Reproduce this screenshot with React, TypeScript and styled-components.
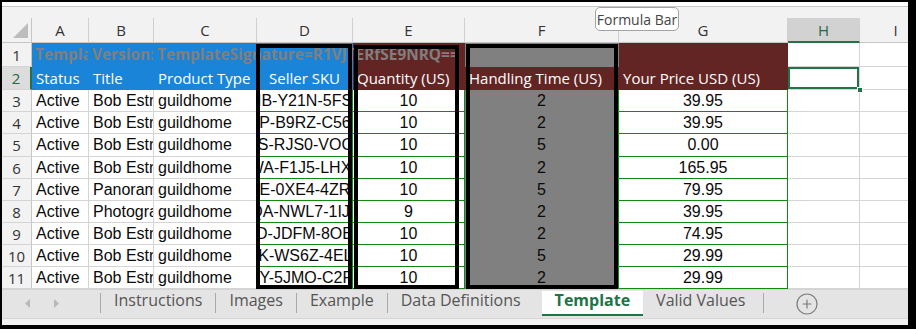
import React from 'react';
import styled, { createGlobalStyle, css } from 'styled-components';
import { CirclePlus } from 'lucide-react';

const GlobalStyle = createGlobalStyle`
  html, body { margin: 0; padding: 0; background: #000; }
  body { width: 916px; height: 329px; overflow: hidden; }
  *, *::before, *::after { box-sizing: border-box; }
`;

const BLUE = '#1a84d8';
const MAROON = '#632523';
const GRAY = '#808080';
const GREEN = '#118a11';
const XL_GREEN = '#217346';
const GRID = '#d4d4d4';

type Fill = 'white' | 'blue' | 'maroon' | 'gray';
type Line = 'grid' | 'green' | 'none' | 'greenRight';
type Kind = 'data' | 'head' | 'sig';

const fills: Record<Fill, string> = { white: '#fff', blue: BLUE, maroon: MAROON, gray: GRAY };

const Frame = styled.div`
  width: 916px;
  height: 329px;
  background: #000;
  padding: 2px 8px 4px 2px;
`;

const Window = styled.div`
  position: relative;
  height: 100%;
  display: flex;
  flex-direction: column;
  background: #fff;
  overflow: hidden;
`;

const TopStrip = styled.div`
  flex: none;
  height: 16px;
  background: #f2f2f2;
  border-top: 4px solid #fff;
  box-shadow: inset 0 1px 0 #c8c8c8;
`;

const Tooltip = styled.div`
  position: absolute;
  left: 593px;
  top: 5px;
  width: 84px;
  height: 24px;
  z-index: 5;
  display: flex;
  align-items: center;
  justify-content: center;
  background: #fff;
  border: 1px solid #a3a3a3;
  border-radius: 5px;
  font: 14px 'Open Sans', sans-serif;
  color: #444;
  white-space: nowrap;
`;

const Sheet = styled.div`
  position: relative;
  flex: none;
  display: grid;
  grid-template-columns: 30px 57px 65px 103px 96px 112px 154px 169px 72px 72px;
  grid-template-rows: 25px 24px 23px 22px 22px 23px 22px 22px 22px 22px 22px 22px;
  width: 952px;
`;

const Corner = styled.div`
  display: flex;
  justify-content: flex-end;
  align-items: flex-end;
  padding: 0 3px 4px 0;
  background: #f2f2f2;
  border-right: 1px solid #c6c6c6;
  border-bottom: 1px solid #c6c6c6;
`;

const ColHead = styled.div<{ $active?: boolean }>`
  display: flex;
  align-items: center;
  justify-content: center;
  background: ${p => (p.$active ? '#d2d2d2' : '#f2f2f2')};
  border-right: 1px solid #d0d0d0;
  border-bottom: ${p => (p.$active ? `2px solid ${XL_GREEN}` : '1px solid #c6c6c6')};
  color: ${p => (p.$active ? '#1f6a42' : '#333')};
  font: 15px 'Open Sans', sans-serif;
`;

const RowHead = styled.div<{ $active?: boolean }>`
  display: flex;
  align-items: center;
  justify-content: center;
  background: ${p => (p.$active ? '#dcdcdc' : '#f2f2f2')};
  border-right: ${p => (p.$active ? `2px solid ${XL_GREEN}` : '1px solid #c6c6c6')};
  border-bottom: 1px solid #d4d4d4;
  color: ${p => (p.$active ? '#1f6a42' : '#333')};
  font: 15px 'Open Sans', sans-serif;
`;

const lineColors = (fill: Fill, line: Line) => {
  const bg = fills[fill];
  switch (line) {
    case 'grid':
      return { right: GRID, bottom: GRID };
    case 'green':
      return { right: GREEN, bottom: GREEN };
    case 'greenRight':
      return { right: GREEN, bottom: bg };
    default:
      return { right: bg, bottom: bg };
  }
};

const kindFont = (k: Kind) => {
  if (k === 'sig')
    return css`
      font: 700 15.4px 'Open Sans', sans-serif;
      color: #7f7f7f;
    `;
  if (k === 'head')
    return css`
      font: 15px 'Open Sans', sans-serif;
      color: #fff;
    `;
  return css`
    font: 16px 'Liberation Sans', Arial, sans-serif;
    color: #0a0a0a;
  `;
};

const Cell = styled.div<{ $fill?: Fill; $line?: Line; $center?: boolean; $spill?: boolean; $kind?: Kind }>`
  display: flex;
  align-items: center;
  justify-content: ${p => (p.$center ? 'center' : 'flex-start')};
  padding: ${p => (p.$center ? '0' : p.$kind === 'sig' ? '0 1px 0 3px' : '0 2px 0 4px')};
  background: ${p => fills[p.$fill ?? 'white']};
  border-right: 1px solid ${p => lineColors(p.$fill ?? 'white', p.$line ?? 'grid').right};
  border-bottom: 1px solid ${p => lineColors(p.$fill ?? 'white', p.$line ?? 'grid').bottom};
  white-space: nowrap;
  overflow: ${p => (p.$spill ? 'visible' : 'hidden')};
  ${p =>
    p.$spill &&
    css`
      position: relative;
      z-index: 1;
    `}
  ${p => kindFont(p.$kind ?? 'data')}
`;

const SelectedCell = styled(Cell)`
  position: relative;
  z-index: 2;
  overflow: visible;
  box-shadow: inset 0 0 0 2px ${XL_GREEN};
  &::after {
    content: '';
    position: absolute;
    right: -4px;
    bottom: -4px;
    width: 6px;
    height: 6px;
    background: ${XL_GREEN};
    border: 1px solid #fff;
  }
`;

const Outline = styled.div<{ $x: number; $y: number; $w: number; $h: number }>`
  position: absolute;
  left: ${p => p.$x}px;
  top: ${p => p.$y}px;
  width: ${p => p.$w}px;
  height: ${p => p.$h}px;
  border: 4px solid #000;
  z-index: 3;
  pointer-events: none;
`;

const TabBar = styled.div`
  flex: none;
  height: 29px;
  display: flex;
  align-items: flex-start;
  background: #e4e4e4;
  border-top: 1px solid #d4d4d4;
  font-family: 'Open Sans', sans-serif;
  font-size: 16px;
`;

const Nav = styled.div`
  width: 98px;
  height: 26px;
  display: flex;
  align-items: center;
  gap: 24px;
  padding-left: 23px;
  padding-top: 1px;
  color: #b9b9b9;
`;

const Sep = styled.span`
  flex: none;
  width: 1px;
  height: 20px;
  margin-top: 3px;
  background: #a9a9a9;
`;

const Tab = styled.div<{ $active?: boolean }>`
  flex: none;
  height: 25px;
  margin-top: 1px;
  padding: 0 13px;
  line-height: 18px;
  color: #555;
  white-space: nowrap;
  ${p =>
    p.$active &&
    css`
      margin-left: 8px;
      background: #fff;
      color: ${XL_GREEN};
      font-weight: 700;
      border-bottom: 2px solid ${XL_GREEN};
    `}
`;

const LastTab = styled(Tab)`
  padding-right: 18px;
`;

const AddButton = styled.div`
  flex: none;
  margin: 2px 0 0 31px;
  height: 24px;
  display: flex;
  align-items: center;
  color: #7b7b7b;
`;

const StatusStrip = styled.div`
  flex: none;
  height: 7px;
  background: #f1f1f1;
  border-top: 1px solid #d6d6d6;
`;

const COLS = ['A', 'B', 'C', 'D', 'E', 'F', 'G', 'H', 'I'];

const rows = [
  { title: 'Bob Estrin', sku: 'MB-Y21N-5FS8', qty: '10', ht: '2', price: '39.95' },
  { title: 'Bob Estrin', sku: 'HP-B9RZ-C56X', qty: '10', ht: '2', price: '39.95' },
  { title: 'Bob Estrin', sku: 'KS-RJS0-VOC3', qty: '10', ht: '5', price: '0.00' },
  { title: 'Bob Estrin', sku: 'WA-F1J5-LHX2', qty: '10', ht: '2', price: '165.95' },
  { title: 'Panoramic', sku: 'TE-0XE4-4ZR7', qty: '10', ht: '5', price: '79.95' },
  { title: 'Photograph', sku: 'QA-NWL7-1IJ9', qty: '9', ht: '2', price: '39.95' },
  { title: 'Bob Estrin', sku: '0D-JDFM-8OB5', qty: '10', ht: '2', price: '74.95' },
  { title: 'Bob Estrin', sku: 'XK-WS6Z-4EL1', qty: '10', ht: '5', price: '29.99' },
  { title: 'Bob Estrin', sku: 'GY-5JMO-C2P4', qty: '10', ht: '2', price: '29.99' },
];

const tabs = ['Instructions', 'Images', 'Example', 'Data Definitions'];

export default function App() {
  return (
    <>
      <GlobalStyle />
      <Frame>
        <Window>
          <TopStrip />
          <Tooltip>Formula Bar</Tooltip>
          <Sheet>
            <Corner>
              <svg width="15" height="15" viewBox="0 0 15 15">
                <polygon points="15,0 15,15 0,15" fill="#bdbdbd" />
              </svg>
            </Corner>
            {COLS.map(c => (
              <ColHead key={c} $active={c === 'H'}>
                {c}
              </ColHead>
            ))}

            <RowHead>1</RowHead>
            <Cell $fill="blue" $line="none" $kind="sig">TemplateType</Cell>
            <Cell $fill="blue" $line="none" $kind="sig">Version:</Cell>
            <Cell $fill="blue" $line="none" $kind="sig" $spill>
              TemplateSignature=R1VJTERfSE9NRQ==
            </Cell>
            <Cell $fill="blue" $line="none" />
            <Cell $fill="maroon" $line="none" />
            <Cell $fill="gray" $line="none" />
            <Cell $fill="maroon" $line="none" />
            <Cell />
            <Cell />

            <RowHead $active>2</RowHead>
            <Cell $fill="blue" $line="none" $kind="head">Status</Cell>
            <Cell $fill="blue" $line="none" $kind="head">Title</Cell>
            <Cell $fill="blue" $line="none" $kind="head">Product Type</Cell>
            <Cell $fill="blue" $line="none" $kind="head" $center>Seller SKU</Cell>
            <Cell $fill="maroon" $line="none" $kind="head">Quantity (US)</Cell>
            <Cell $fill="maroon" $line="none" $kind="head">Handling Time (US)</Cell>
            <Cell $fill="maroon" $line="none" $kind="head">Your Price USD (US)</Cell>
            <SelectedCell />
            <Cell />

            {rows.map((r, i) => (
              <React.Fragment key={i}>
                <RowHead>{i + 3}</RowHead>
                <Cell>Active</Cell>
                <Cell>{r.title}</Cell>
                <Cell>guildhome</Cell>
                <Cell $line="green" $center>{r.sku}</Cell>
                <Cell $line="green" $center>{r.qty}</Cell>
                <Cell $fill="gray" $line="greenRight" $center>{r.ht}</Cell>
                <Cell $line="green" $center>{r.price}</Cell>
                <Cell />
                <Cell />
              </React.Fragment>
            ))}

            <Outline $x={254} $y={26} $w={96} $h={245} />
            <Outline $x={352} $y={27} $w={105} $h={244} />
            <Outline $x={464} $y={26} $w={152} $h={245} />
          </Sheet>

          <TabBar>
            <Nav>
              <svg width="5" height="9" viewBox="0 0 5 9">
                <polygon points="5,0 5,9 0,4.5" fill="currentColor" />
              </svg>
              <svg width="5" height="9" viewBox="0 0 5 9">
                <polygon points="0,0 0,9 5,4.5" fill="currentColor" />
              </svg>
            </Nav>
            <Sep />
            {tabs.map((t, i) => (
              <React.Fragment key={t}>
                <Tab>{t}</Tab>
                {i < tabs.length - 1 && <Sep />}
              </React.Fragment>
            ))}
            <Tab $active>Template</Tab>
            <LastTab>Valid Values</LastTab>
            <Sep />
            <AddButton>
              <CirclePlus size={24} strokeWidth={1.2} />
            </AddButton>
          </TabBar>
          <StatusStrip />
        </Window>
      </Frame>
    </>
  );
}
